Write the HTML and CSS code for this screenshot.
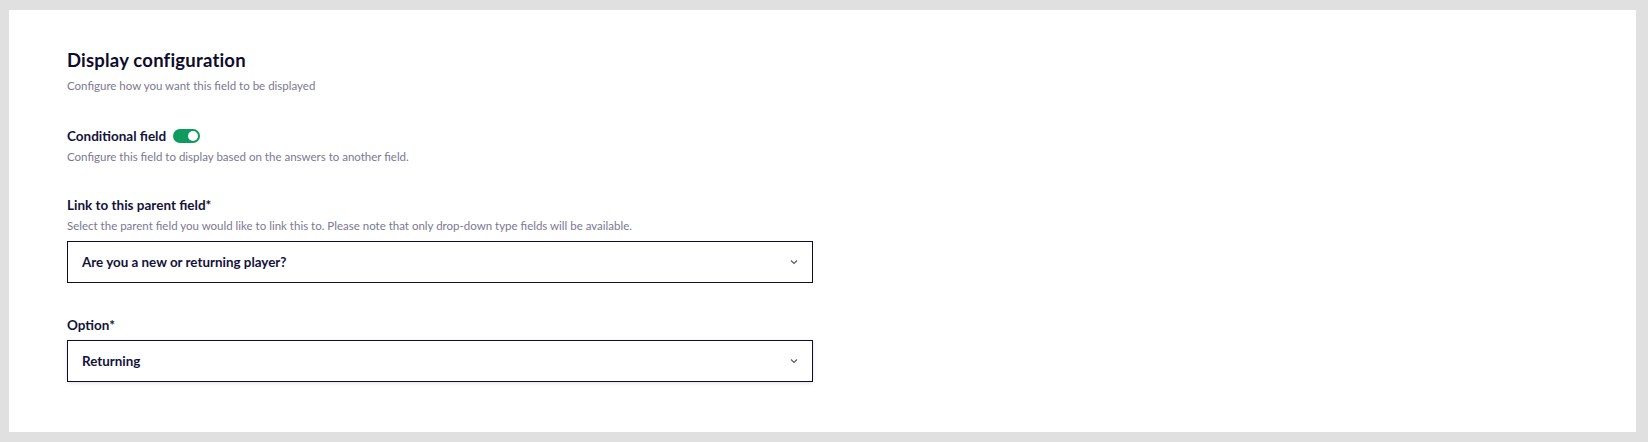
FILE: index.html
```html
<!DOCTYPE html>
<html lang="en">
<head>
    <meta charset="UTF-8">
    <meta name="viewport" content="width=device-width, initial-scale=1.0">
    <title>Display configuration</title>
    <link rel="stylesheet" href="styles.css">
</head>
<body>
    <div class="panel">
        <div class="section-head">
            <h2 class="section-title">Display configuration</h2>
            <p class="section-sub">Configure how you want this field to be displayed</p>
        </div>

        <!-- Conditional toggle -->
        <div class="field field-first">
            <div class="toggle-row">
                <span class="field-label">Conditional field</span>
                <span class="toggle is-on"><span class="toggle-knob"></span></span>
            </div>
            <p class="field-help">Configure this field to display based on the answers to another field.</p>
        </div>

        <div class="field">
            <label class="field-label">Link to this parent field*</label>
            <p class="field-help">Select the parent field you would like to link this to. Please note that only drop-down type fields will be available.</p>
            <div class="select">
                <span class="select-value">Are you a new or returning player?</span>
                <svg class="select-arrow" width="8" height="6" viewBox="0 0 8 6"><path d="M1 1.5l3 3 3-3" fill="none" stroke="#5a5a66" stroke-width="1.2"/></svg>
            </div>
        </div>

        <div class="field field-last">
            <label class="field-label">Option*</label>
            <div class="select select-raised">
                <span class="select-value">Returning</span>
                <svg class="select-arrow" width="8" height="6" viewBox="0 0 8 6"><path d="M1 1.5l3 3 3-3" fill="none" stroke="#5a5a66" stroke-width="1.2"/></svg>
            </div>
        </div>
    </div>
</body>
</html>
```

FILE: styles.css
```css
* {
    margin: 0;
    padding: 0;
    box-sizing: border-box;
}

body {
    font-family: 'Lato', 'Liberation Sans', sans-serif;
    background: #e0e0e0;
    padding: 10px 12px 10px 9px;
    color: #14123a;
}

.panel {
    background: #fff;
    height: 422px;
    padding: 37px 58px 0 58px;
}

.section-title {
    font-size: 18.5px;
    line-height: 26px;
    font-weight: 700;
    color: #0e0c2c;
    letter-spacing: 0.2px;
}

.section-sub {
    font-size: 11.5px;
    line-height: 16px;
    margin-top: 5px;
    color: #7b7891;
}

.field {
    margin-top: 31px;
}

.field-first {
    margin-top: 33px;
}

.field-last {
    margin-top: 33px;
}

.toggle-row {
    display: flex;
    align-items: center;
    gap: 7px;
}

.field-label {
    display: block;
    font-size: 13.5px;
    line-height: 18px;
    font-weight: 700;
    color: #14123a;
}

.field-help {
    font-size: 11.5px;
    line-height: 16px;
    margin-top: 4px;
    color: #7b7891;
}

.toggle {
    width: 27px;
    height: 14px;
    border-radius: 7px;
    background: #0f9a5e;
    display: flex;
    align-items: center;
    justify-content: flex-end;
    padding: 0 2px;
}

.toggle-knob {
    width: 10px;
    height: 10px;
    border-radius: 50%;
    background: #fff;
}

.select {
    margin-top: 7px;
    width: 746px;
    height: 42px;
    border: 1.5px solid #0f0c2e;
    display: flex;
    align-items: center;
    justify-content: space-between;
    padding: 0 14px;
    background: #fff;
}

.select-raised {
    margin-top: 6px;
    box-shadow: 0 1px 4px rgba(0, 0, 0, 0.12);
}

.select-value {
    font-size: 13.4px;
    font-weight: 700;
    color: #14123a;
}
```
